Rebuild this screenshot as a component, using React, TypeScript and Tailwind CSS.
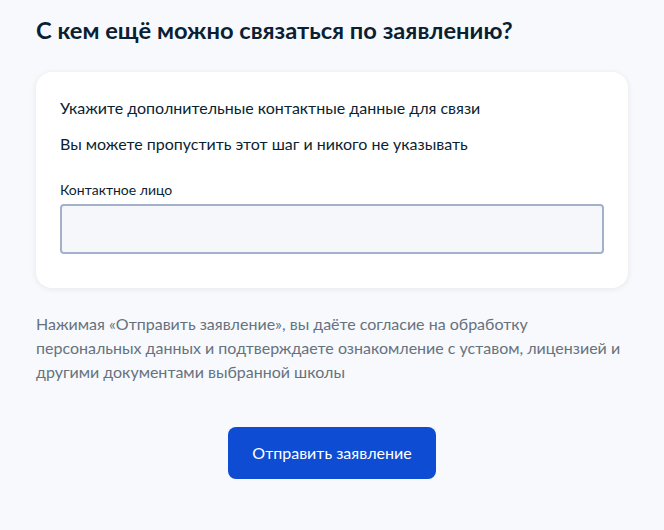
import React from "react";

export default function App() {
  return (
    <div
      className="min-h-[530px] w-full bg-[#f8f9fc] px-9 pt-[14px] text-[#0b1f33]"
      style={{ fontFamily: "Lato, 'Noto Sans', sans-serif" }}
    >
      <h1 className="text-[23.7px] font-bold leading-8 text-[#0b1f33]">
        С кем ещё можно связаться по заявлению?
      </h1>
      <div className="mt-[26px] rounded-2xl bg-white px-6 pt-6 pb-[34px] shadow-[0_1px_6px_rgba(11,31,51,0.08)]">
        <p className="text-[16px] leading-6">Укажите дополнительные контактные данные для связи</p>
        <p className="mt-3 text-[16px] leading-6">Вы можете пропустить этот шаг и никого не указывать</p>
        <label className="mt-6 block text-[14px] leading-5">Контактное лицо</label>
        <div className="mt-1 h-[50px] w-full rounded bg-[#f5f7fa] border-2 border-[#a4b1cb]" />
      </div>
      <p className="mt-6 text-[16px] leading-6 text-[#66727f]">
        Нажимая «Отправить заявление», вы даёте согласие на обработку персональных данных и подтверждаете
        ознакомление с уставом, лицензией и другими документами выбранной школы
      </p>
      <div className="mt-[43px] flex justify-center">
        <button className="h-[52px] w-[208px] rounded-lg bg-[#0d4cd3] text-[16px] text-white">
          Отправить заявление
        </button>
      </div>
    </div>
  );
}
